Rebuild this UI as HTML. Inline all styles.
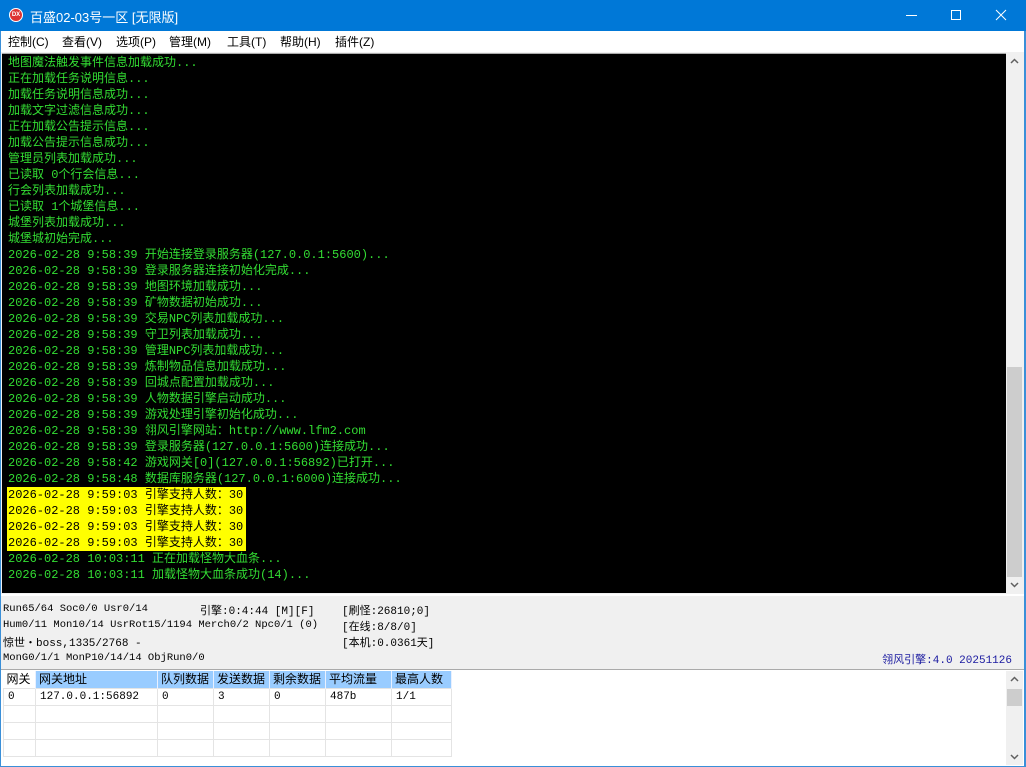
<!DOCTYPE html>
<html><head><meta charset="utf-8"><style>
*{margin:0;padding:0;box-sizing:border-box}
body{width:1026px;height:767px;overflow:hidden;background:#f0f0f0;position:relative;font-family:"Liberation Sans","Noto Sans CJK SC",sans-serif}
.title{position:absolute;left:0;top:0;width:1026px;height:31px;background:#0078d7;color:#fff;font-size:13px}
.title .t{position:absolute;left:30px;top:7px}
.icon{position:absolute;left:9px;top:8px;width:14px;height:14px;border-radius:50%;background:#d33;border:1px solid #fff;color:#fff;font-size:6px;line-height:12px;text-align:center;font-weight:bold}
.menu{position:absolute;left:0;top:31px;width:1026px;height:21px;background:#fff;font-size:12px}
.menu span{position:absolute;top:2px}
.con{position:absolute;left:2px;top:53px;width:1004px;height:540px;background:#000;border-top:1px solid #aaa;overflow:hidden}
.lines{position:absolute;left:6px;top:1px;font-family:"Liberation Mono","Noto Sans CJK SC",monospace;font-size:12px;color:#33dd33;line-height:16px}
.lines div{height:16px;white-space:pre}
.hl{background:#ff0;color:#000;display:inline-block;width:239px;margin-left:-1px;padding-left:1px}
.sb{position:absolute;left:1006px;top:53px;width:17px;height:540px;background:#f0f0f0}
.thumb{position:absolute;left:1px;top:314px;width:15px;height:210px;background:#cdcdcd}
.st{position:absolute;font-family:"Liberation Mono","Noto Sans CJK SC",monospace;font-size:10.5px;color:#000;white-space:pre}
table{position:absolute;left:3px;top:671px;border-collapse:collapse;table-layout:fixed;width:448px;font-size:12px;font-family:"Liberation Sans","Noto Sans CJK SC",sans-serif}
td{border:1px solid #e4e4e4;height:17px;padding:0 4px;background:#fff;font-family:"Liberation Mono","Noto Sans CJK SC",monospace;font-size:11px;white-space:nowrap;overflow:hidden;line-height:15px}
th{background:#99ccff;font-weight:normal;height:17px;text-align:left;padding:0 3px;border-right:1px solid #e8f0ff;font-size:12px;white-space:nowrap;overflow:hidden;line-height:17px}
th.f{background:#fff}
.tbl{position:absolute;left:1px;top:669px;width:1023px;height:97px;background:#fff;border-top:1px solid #aaa;overflow:hidden}
</style></head><body>
<div class="title"><div class="icon">DX</div><span class="t">百盛02-03号一区 [无限版]</span>
<svg style="position:absolute;left:900px;top:8px" width="120" height="16"><line x1="6" y1="7.5" x2="17" y2="7.5" stroke="#fff"/><rect x="51.5" y="2.5" width="9" height="9" fill="none" stroke="#fff"/><path d="M96 2L106 12M106 2L96 12" stroke="#fff"/></svg></div>
<div class="menu"><span style="left:8px">控制(C)</span><span style="left:62px">查看(V)</span><span style="left:116px">选项(P)</span><span style="left:169px">管理(M)</span><span style="left:227px">工具(T)</span><span style="left:280px">帮助(H)</span><span style="left:335px">插件(Z)</span></div>
<div class="con"><div class="lines"><div>地图魔法触发事件信息加载成功...</div><div>正在加载任务说明信息...</div><div>加载任务说明信息成功...</div><div>加载文字过滤信息成功...</div><div>正在加载公告提示信息...</div><div>加载公告提示信息成功...</div><div>管理员列表加载成功...</div><div>已读取 0个行会信息...</div><div>行会列表加载成功...</div><div>已读取 1个城堡信息...</div><div>城堡列表加载成功...</div><div>城堡城初始完成...</div><div>2026-02-28 9:58:39 开始连接登录服务器(127.0.0.1:5600)...</div><div>2026-02-28 9:58:39 登录服务器连接初始化完成...</div><div>2026-02-28 9:58:39 地图环境加载成功...</div><div>2026-02-28 9:58:39 矿物数据初始成功...</div><div>2026-02-28 9:58:39 交易NPC列表加载成功...</div><div>2026-02-28 9:58:39 守卫列表加载成功...</div><div>2026-02-28 9:58:39 管理NPC列表加载成功...</div><div>2026-02-28 9:58:39 炼制物品信息加载成功...</div><div>2026-02-28 9:58:39 回城点配置加载成功...</div><div>2026-02-28 9:58:39 人物数据引擎启动成功...</div><div>2026-02-28 9:58:39 游戏处理引擎初始化成功...</div><div>2026-02-28 9:58:39 翎风引擎网站：http://www.lfm2.com</div><div>2026-02-28 9:58:39 登录服务器(127.0.0.1:5600)连接成功...</div><div>2026-02-28 9:58:42 游戏网关[0](127.0.0.1:56892)已打开...</div><div>2026-02-28 9:58:48 数据库服务器(127.0.0.1:6000)连接成功...</div><div><span class="hl">2026-02-28 9:59:03 引擎支持人数：30</span></div><div><span class="hl">2026-02-28 9:59:03 引擎支持人数：30</span></div><div><span class="hl">2026-02-28 9:59:03 引擎支持人数：30</span></div><div><span class="hl">2026-02-28 9:59:03 引擎支持人数：30</span></div><div>2026-02-28 10:03:11 正在加载怪物大血条...</div><div>2026-02-28 10:03:11 加载怪物大血条成功(14)...</div></div></div>
<div class="sb"><svg width="17" height="17" style="position:absolute;top:0"><path d="M5 10L8.5 6.5L12 10" stroke="#606060" stroke-width="1.5" fill="none"/></svg><div class="thumb"></div><svg width="17" height="17" style="position:absolute;top:523px"><path d="M5 7L8.5 10.5L12 7" stroke="#606060" stroke-width="1.5" fill="none"/></svg></div>
<div style="position:absolute;left:0;top:594px;width:1026px;height:2px;background:#fff"></div>
<div class="st" style="left:3px;top:603px">Run65/64 Soc0/0 Usr0/14</div>
<div class="st" style="left:200px;top:602px;font-size:11px">引擎:0:4:44 [M][F]</div>
<div class="st" style="left:342px;top:602px;font-size:11px">[刷怪:26810;0]</div>
<div class="st" style="left:3px;top:619px">Hum0/11 Mon10/14 UsrRot15/1194 Merch0/2 Npc0/1 (0)</div>
<div class="st" style="left:342px;top:618px;font-size:11px">[在线:8/8/0]</div>
<div class="st" style="left:3px;top:634px;font-size:11px">惊世・boss,1335/2768 -</div>
<div class="st" style="left:342px;top:634px;font-size:11px">[本机:0.0361天]</div>
<div class="st" style="left:3px;top:652px">MonG0/1/1 MonP10/14/14 ObjRun0/0</div>
<div class="st" style="right:14px;top:651px;font-size:11px;color:#1a1aa0">翎风引擎:4.0 20251126</div>
<div class="tbl"></div>
<table>
<colgroup><col style="width:32px"><col style="width:122px"><col style="width:56px"><col style="width:56px"><col style="width:56px"><col style="width:66px"><col style="width:60px"></colgroup>
<tr><th class="f">网关</th><th>网关地址</th><th>队列数据</th><th>发送数据</th><th>剩余数据</th><th>平均流量</th><th>最高人数</th></tr>
<tr><td>0</td><td>127.0.0.1:56892</td><td>0</td><td>3</td><td>0</td><td>487b</td><td>1/1</td></tr>
<tr><td></td><td></td><td></td><td></td><td></td><td></td><td></td></tr>
<tr><td></td><td></td><td></td><td></td><td></td><td></td><td></td></tr>
<tr><td></td><td></td><td></td><td></td><td></td><td></td><td></td></tr>
</table>
<div style="position:absolute;left:1006px;top:671px;width:17px;height:94px;background:#f0f0f0"><svg width="17" height="17"><path d="M5 10L8.5 6.5L12 10" stroke="#606060" stroke-width="1.5" fill="none"/></svg><div style="position:absolute;left:1px;top:18px;width:15px;height:17px;background:#cdcdcd"></div><svg width="17" height="17" style="position:absolute;top:77px;left:0"><path d="M5 7L8.5 10.5L12 7" stroke="#606060" stroke-width="1.5" fill="none"/></svg></div>
<div style="position:absolute;left:1024px;top:31px;width:2px;height:736px;background:#3a8fd8"></div>
<div style="position:absolute;left:0;top:31px;width:1px;height:736px;background:#3a8fd8"></div>
<div style="position:absolute;left:0;top:766px;width:1026px;height:1px;background:#3a8fd8"></div>
</body></html>
